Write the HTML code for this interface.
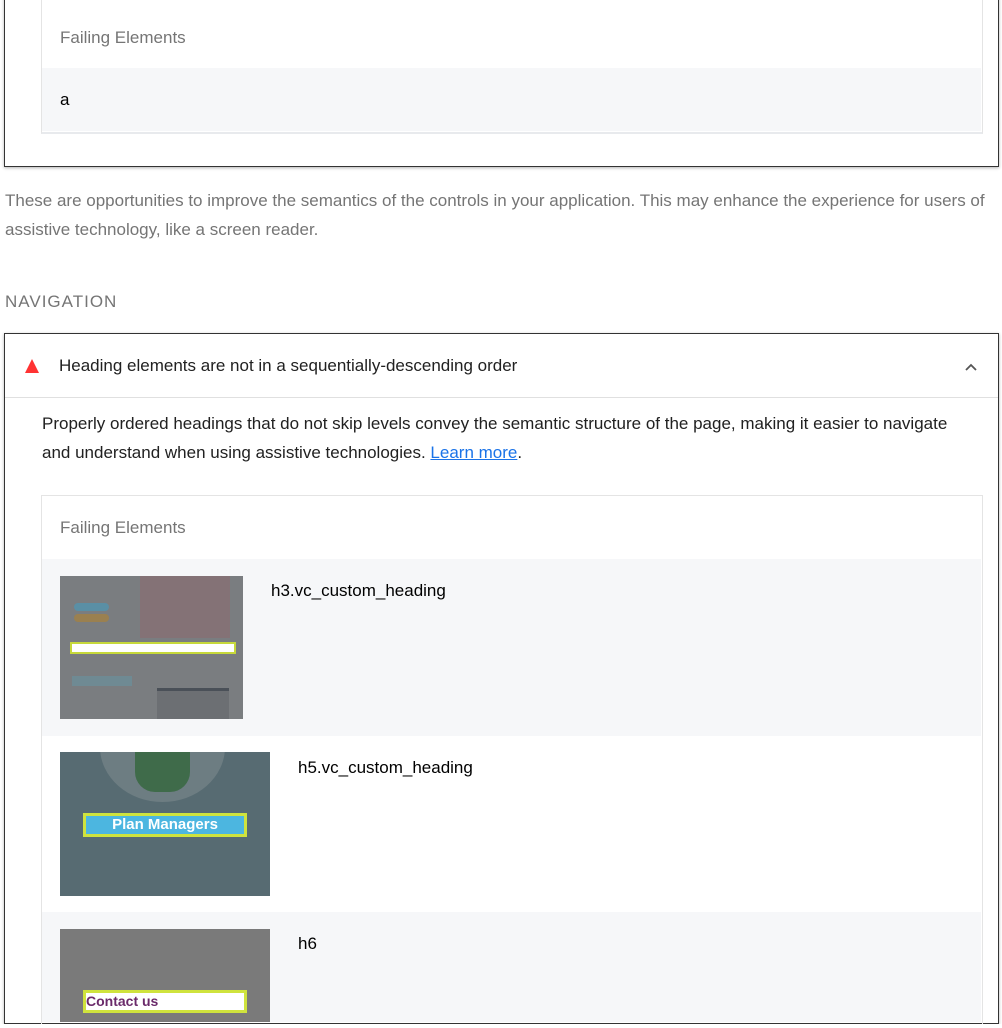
<!DOCTYPE html>
<html style="overflow:hidden"><head><style>
html,body{margin:0;overflow:hidden}
#w{width:1002px;height:1028px;overflow:hidden;background:#fff;font-family:"Liberation Sans",Arial,sans-serif;position:relative;font-size:17px}
.abs{position:absolute}
.box{border:1px solid #333;box-shadow:0 1px 3px rgba(0,0,0,.3)}
.tbl{border:1px solid #e4e4e4;border-bottom:none}
.gray{color:#757575}
</style></head><body><div id="w">
<div class="abs box" style="left:4px;top:-10px;width:993px;height:175px"></div>
<div class="abs tbl" style="left:41px;top:-2px;width:940px;height:133px;border-bottom:2px solid #e8eaed"></div>
<div class="abs" style="left:42px;top:68px;width:939px;height:63px;background:#f6f7f9"></div>
<div class="abs gray" style="left:60px;top:28px">Failing Elements</div>
<div class="abs" style="left:60px;top:90px">a</div>

<div class="abs gray" style="left:5px;top:186px;line-height:29px;width:995px">These are opportunities to improve the semantics of the controls in your application. This may enhance the experience for users of assistive technology, like a screen reader.</div>
<div class="abs gray" style="left:5px;top:292px;letter-spacing:1px">NAVIGATION</div>

<div class="abs" style="left:0;top:0;width:1002px;height:1024px;overflow:hidden">
<div class="abs box" style="left:4px;top:333px;width:993px;height:689px"></div>
<div class="abs" style="left:5px;top:397px;width:993px;height:1px;background:#e0e0e0"></div>
<svg class="abs" style="left:24px;top:358px" width="16" height="16"><polygon points="8,1 15,15 1,15" fill="#f33"/></svg>
<div class="abs" style="left:59px;top:356px;color:#212121">Heading elements are not in a sequentially-descending order</div>
<svg class="abs" style="left:964px;top:362px" width="14" height="10"><polyline points="2,8 7,3 12,8" fill="none" stroke="#555" stroke-width="1.8"/></svg>
<div class="abs" style="left:42px;top:409px;line-height:29px;color:#212121;width:935px">Properly ordered headings that do not skip levels convey the semantic structure of the page, making it easier to navigate and understand when using assistive technologies. <span style="color:#1a73e8;text-decoration:underline">Learn more</span>.</div>

<div class="abs tbl" style="left:41px;top:495px;width:940px;height:600px"></div>
<div class="abs gray" style="left:60px;top:518px">Failing Elements</div>
<div class="abs" style="left:42px;top:559px;width:939px;height:177px;background:#f6f7f9"></div>
<div class="abs" style="left:42px;top:912px;width:939px;height:110px;background:#f6f7f9"></div>

<div class="abs" style="left:60px;top:576px;width:183px;height:143px;background:#7a7d80;overflow:hidden">
 <div class="abs" style="left:80px;top:0;width:90px;height:62px;background:#8a6a70;opacity:.6"></div>
 <div class="abs" style="left:14px;top:27px;width:35px;height:8px;border-radius:4px;background:#5a8fa5"></div>
 <div class="abs" style="left:14px;top:38px;width:35px;height:8px;border-radius:4px;background:#9a8050"></div>
 <div class="abs" style="left:10px;top:66px;width:162px;height:8px;background:#fff;border:2px solid #c6d83a"></div>
 <div class="abs" style="left:12px;top:100px;width:60px;height:10px;background:#6f8a93"></div>
 <div class="abs" style="left:97px;top:112px;width:72px;height:28px;background:#6c6f73;border-top:3px solid #4a5058"></div>
</div>
<div class="abs" style="left:271px;top:581px">h3.vc_custom_heading</div>

<div class="abs" style="left:60px;top:752px;width:210px;height:144px;background:#576b72;overflow:hidden">
 <div class="abs" style="left:40px;top:-60px;width:125px;height:110px;border-radius:50%;background:#6d7d82"></div>
 <div class="abs" style="left:75px;top:0;width:55px;height:40px;background:#3f6b4a;border-radius:0 0 20px 20px"></div>
 <div class="abs" style="left:23px;top:61px;width:158px;height:18px;background:#4cb6e0;border:3px solid #cfe33d;color:#fff;font-size:15px;text-align:center;line-height:18px;font-weight:bold">Plan Managers</div>
</div>
<div class="abs" style="left:298px;top:758px">h5.vc_custom_heading</div>

<div class="abs" style="left:60px;top:929px;width:210px;height:93px;background:#7a7a7a;overflow:hidden">
 <div class="abs" style="left:23px;top:61px;width:158px;height:17px;background:#fff;border:3px solid #cfe33d;color:#6a2a6a;font-size:14px;line-height:17px;font-weight:bold">Contact us</div>
</div>
<div class="abs" style="left:298px;top:934px">h6</div>
</div>
</div></body></html>
